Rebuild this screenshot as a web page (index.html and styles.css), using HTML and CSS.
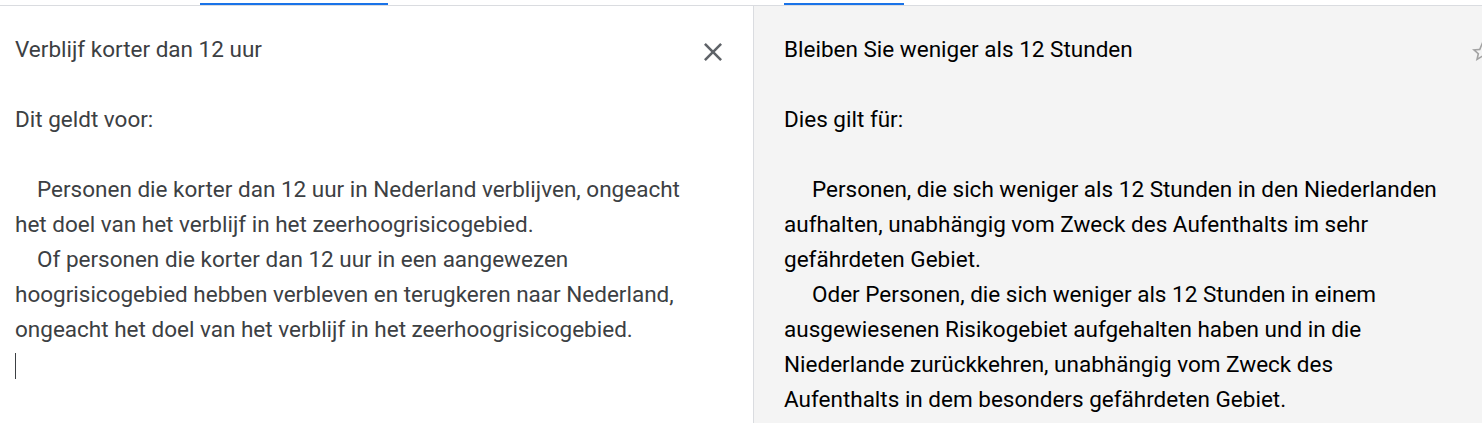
FILE: index.html
```html
<!DOCTYPE html>
<html lang="nl">

<head>
    <meta charset="UTF-8">
    <meta name="viewport" content="width=device-width, initial-scale=1.0">
    <title>Vertalen</title>
    <link rel="stylesheet" href="styles.css">
</head>

<body>

    <div class="tabs">
        <div class="tab-line tab-source"></div>
        <div class="tab-line tab-target"></div>
    </div>

    <main class="panes">
        <section class="pane source-pane">
            <div class="text source-text">
                <p>Verblijf korter dan 12 uur</p>
                <p class="empty"></p>
                <p>Dit geldt voor:</p>
                <p class="empty"></p>
                <p class="indent-src">Personen die korter dan 12 uur in Nederland verblijven, ongeacht<br>het doel van het verblijf in het zeerhoogrisicogebied.</p>
                <p class="indent-src">Of personen die korter dan 12 uur in een aangewezen<br>hoogrisicogebied hebben verbleven en terugkeren naar Nederland,<br>ongeacht het doel van het verblijf in het zeerhoogrisicogebied.</p>
                <p><span class="caret"></span></p>
            </div>
            <button class="close-btn" title="Brontekst wissen">
                <svg viewBox="5 5 14 14" width="18" height="18">
                    <path d="M19 6.41L17.59 5 12 10.59 6.41 5 5 6.41 10.59 12 5 17.59 6.41 19 12 13.41 17.59 19 19 17.59 13.41 12z" fill="#5f6368"/>
                </svg>
            </button>
        </section>

        <section class="pane target-pane">
            <div class="text target-text">
                <p>Bleiben Sie weniger als 12 Stunden</p>
                <p class="empty"></p>
                <p>Dies gilt für:</p>
                <p class="empty"></p>
                <p class="indent-tgt">Personen, die sich weniger als 12 Stunden in den Niederlanden<br>aufhalten, unabhängig vom Zweck des Aufenthalts im sehr<br>gefährdeten Gebiet.</p>
                <p class="indent-tgt">Oder Personen, die sich weniger als 12 Stunden in einem<br>ausgewiesenen Risikogebiet aufgehalten haben und in die<br>Niederlande zurückkehren, unabhängig vom Zweck des<br>Aufenthalts in dem besonders gefährdeten Gebiet.</p>
            </div>
            <button class="star-btn" title="Vertaling opslaan">
                <svg viewBox="0 0 24 24" width="24" height="24">
                    <path d="M22 9.24l-7.19-.62L12 2 9.19 8.63 2 9.24l5.46 4.73L5.82 21 12 17.27 18.18 21l-1.63-7.03L22 9.24zM12 15.4l-3.76 2.27 1-4.28-3.32-2.88 4.38-.38L12 6.1l1.71 4.04 4.38.38-3.32 2.88 1 4.28L12 15.4z" fill="#a3a3a3"/>
                </svg>
            </button>
        </section>
    </main>

</body>

</html>
```

FILE: styles.css
```css
body {
    margin: 0;
    overflow: hidden;
    background-color: #fff;
    font-family: Roboto, "Noto Sans", sans-serif;
}

.tabs {
    display: flex;
    height: 5px;
    border-bottom: 1px solid #dadce0;
}

.tab-line {
    height: 2px;
    margin-top: 3px;
    background-color: #1a73e8;
}

.tab-source {
    margin-left: 200px;
    width: 188px;
}

.tab-target {
    margin-left: 396px;
    width: 120px;
}

.panes {
    display: flex;
    height: 417px;
}

.pane {
    position: relative;
}

.source-pane {
    width: 753px;
    border-right: 1px solid #dadce0;
}

.target-pane {
    flex: 1;
    background-color: #f4f4f4;
}

.text {
    font-size: 22.5px;
    line-height: 35px;
}

.text p {
    margin: 0;
}

.text .empty {
    height: 35px;
}

.source-text {
    color: #3c4043;
    padding: 26px 0 0 15px;
}

.target-text {
    color: #000;
    padding: 26px 0 0 30px;
}

.indent-src {
    text-indent: 22px;
}

.indent-tgt {
    text-indent: 28px;
}

.caret {
    display: inline-block;
    width: 1px;
    height: 26px;
    background-color: #3c4043;
    vertical-align: middle;
}

.close-btn,
.star-btn {
    position: absolute;
    padding: 0;
    border: none;
    background: none;
    line-height: 0;
}

.close-btn {
    top: 37px;
    left: 704px;
}

.star-btn {
    top: 34px;
    right: -12px;
}
```
